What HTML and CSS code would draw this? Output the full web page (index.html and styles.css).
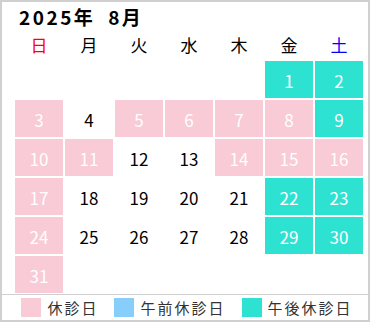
FILE: index.html
```html
<!DOCTYPE html>
<html lang="ja">
<head>
<meta charset="utf-8">
<title>2025年 8月</title>
<link rel="stylesheet" href="styles.css">
</head>
<body>
<div class="cal">
  <div class="title">2025年 <span class="month">8月</span></div>
  <div class="grid">
    <div class="hd sun">日</div>
    <div class="hd">月</div>
    <div class="hd">火</div>
    <div class="hd">水</div>
    <div class="hd">木</div>
    <div class="hd">金</div>
    <div class="hd sat">土</div>

    <div class="d"></div><div class="d"></div><div class="d"></div><div class="d"></div><div class="d"></div>
    <div class="d pm">1</div><div class="d pm">2</div>

    <div class="d off">3</div><div class="d">4</div><div class="d off">5</div><div class="d off">6</div><div class="d off">7</div><div class="d off">8</div><div class="d pm">9</div>

    <div class="d off">10</div><div class="d off">11</div><div class="d">12</div><div class="d">13</div><div class="d off">14</div><div class="d off">15</div><div class="d off">16</div>

    <div class="d off">17</div><div class="d">18</div><div class="d">19</div><div class="d">20</div><div class="d">21</div><div class="d pm">22</div><div class="d pm">23</div>

    <div class="d off">24</div><div class="d">25</div><div class="d">26</div><div class="d">27</div><div class="d">28</div><div class="d pm">29</div><div class="d pm">30</div>

    <div class="d off">31</div>
  </div>
  <div class="legend">
    <div class="item"><span class="sw sw-off"></span><span class="lbl">休診日</span></div>
    <div class="item"><span class="sw sw-am"></span><span class="lbl">午前休診日</span></div>
    <div class="item"><span class="sw sw-pm"></span><span class="lbl">午後休診日</span></div>
  </div>
</div>
</body>
</html>
```
FILE: styles.css
```css
html, body {
  margin: 0;
  padding: 0;
  background: #fff;
}
body {
  font-family: "Noto Sans CJK JP", "Noto Sans", sans-serif;
  color: #000;
}
.cal {
  width: 370px;
  height: 322px;
  box-sizing: border-box;
  border: 2px solid #d0d0d0;
  display: flex;
  flex-direction: column;
}
.title {
  font-weight: bold;
  font-size: 19px;
  line-height: 22px;
  padding: 4px 0 0 17px;
  letter-spacing: 2.5px;
}
.month {
  margin-left: 6px;
}
.grid {
  display: grid;
  grid-template-columns: repeat(7, 48px);
  grid-template-rows: 31px repeat(6, 37px);
  gap: 2px;
  margin-left: 13px;
}
.hd {
  display: flex;
  align-items: center;
  justify-content: center;
  font-size: 17px;
  padding-top: 1px;
}
.sun { color: #ff0000; }
.sat { color: #0000ff; }
.d {
  display: flex;
  align-items: center;
  justify-content: center;
  font-size: 17px;
  padding-top: 1px;
}
.off {
  background: #f8cbd6;
  color: #fff;
}
.pm {
  background: #2ee2d2;
  color: #fff;
}
.legend {
  margin-top: 1px;
  border-top: 1px solid #d0d0d0;
  flex: 1;
  display: flex;
  align-items: center;
  justify-content: center;
  gap: 16px;
  padding-left: 4px;
}
.item {
  display: flex;
  align-items: center;
  gap: 6px;
}
.sw {
  display: block;
  width: 20px;
  height: 19px;
}
.sw-off { background: #f8cbd6; }
.sw-am { background: #87cefa; }
.sw-pm { background: #2ee2d2; }
.lbl {
  font-size: 15px;
  letter-spacing: 2px;
  color: #333;
}
```
